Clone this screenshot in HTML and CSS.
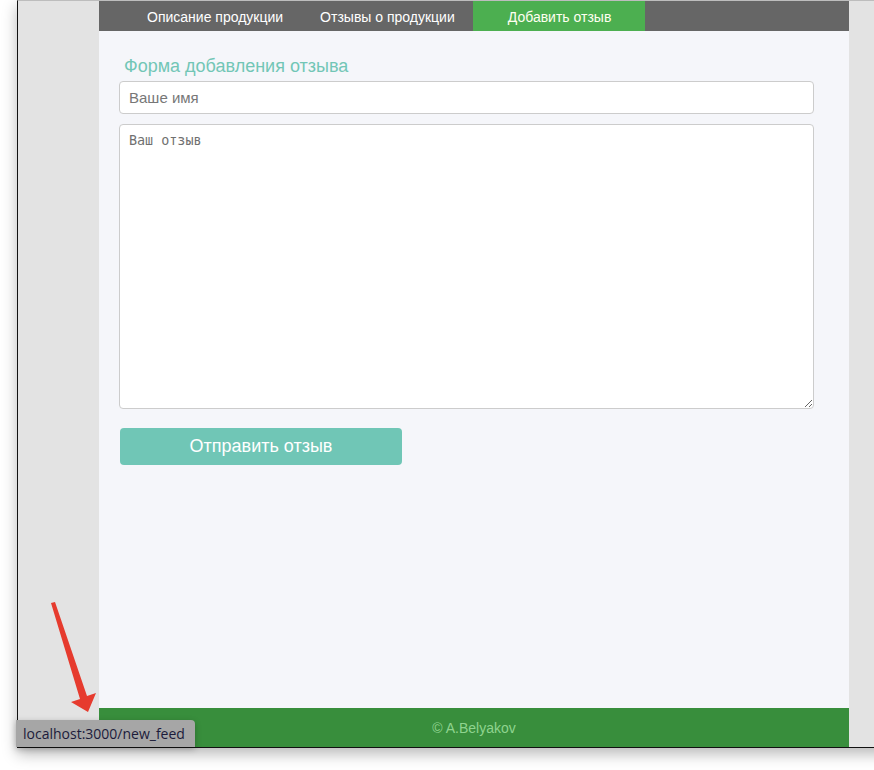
FILE: index.html
```html
<!DOCTYPE html>
<html lang="ru">
<head>
<meta charset="utf-8">
<title>Добавить отзыв</title>
<link rel="stylesheet" href="styles.css">
</head>
<body>
<div class="stage">
  <div class="window">
    <div class="side"></div>
    <div class="page">
      <nav class="nav">
        <a class="nav-item">Описание продукции</a>
        <a class="nav-item">Отзывы о продукции</a>
        <a class="nav-item active">Добавить отзыв</a>
      </nav>
      <main class="content">
        <h2 class="title">Форма добавления отзыва</h2>
        <form class="form">
          <input class="field" type="text" placeholder="Ваше имя">
          <textarea class="area" placeholder="Ваш отзыв"></textarea>
          <button class="submit" type="button">Отправить отзыв</button>
        </form>
      </main>
      <footer class="footer">© A.Belyakov</footer>
    </div>
    <div class="side-right"></div>
  </div>
  <svg class="arrow" width="60" height="120" viewBox="0 0 60 120">
    <polygon points="1,1 5,0 37,94 46,91 38,110 21,100 30,97" fill="#e63b2e"/>
  </svg>
  <div class="status">localhost:3000/new_feed</div>
</div>
</body>
</html>
```
FILE: styles.css
```css
html, body {
  margin: 0;
  padding: 0;
  background: #ffffff;
}
.stage {
  position: relative;
  width: 874px;
  height: 770px;
  overflow: hidden;
  padding-left: 17px;
  box-sizing: border-box;
}
.window {
  display: flex;
  width: 900px;
  height: 748px;
  box-sizing: border-box;
  border-left: 1px solid #111;
  border-top: 1px solid #bdbdbd;
  border-bottom: 1px solid #111;
  background: #e3e3e3;
  box-shadow: 0 6px 14px rgba(0,0,0,0.28);
}
.side {
  width: 81px;
  flex: none;
}
.side-right {
  flex: 1;
}
.page {
  width: 750px;
  flex: none;
  display: flex;
  flex-direction: column;
  background: #f5f6fa;
  font-family: "Liberation Sans", Arial, sans-serif;
}
.nav {
  display: flex;
  height: 30px;
  background: #666666;
  padding-left: 30px;
}
.nav-item {
  display: flex;
  align-items: center;
  padding: 1px 18px 0;
  color: #ffffff;
  font-size: 14px;
}
.nav-item:nth-child(2) {
  padding-left: 19px;
}
.nav-item.active {
  background: #4caf50;
  padding: 1px 34px 0 35px;
  color: #fffff0;
}
.content {
  flex: 1;
  padding: 0 20px;
}
.title {
  margin: 25px 0 4px 5px;
  font-size: 18px;
  font-weight: normal;
  color: #72c6b6;
  line-height: 21px;
}
.form {
  display: flex;
  flex-direction: column;
  align-items: flex-start;
  width: 695px;
}
.field {
  width: 695px;
  height: 33px;
  box-sizing: border-box;
  border: 1px solid #cccccc;
  border-radius: 4px;
  padding: 0 9px;
  font-family: "Liberation Sans", Arial, sans-serif;
  font-size: 15px;
  background: #ffffff;
}
.field::placeholder {
  color: #777777;
}
.area {
  margin-top: 10px;
  width: 695px;
  height: 285px;
  box-sizing: border-box;
  border: 1px solid #cccccc;
  border-radius: 4px;
  padding: 8px 9px 7px;
  font-family: "DejaVu Sans Mono", monospace;
  font-size: 13.4px;
  background: #ffffff;
}
.area::placeholder {
  color: #707070;
}
.submit {
  margin-top: 19px;
  margin-left: 1px;
  width: 282px;
  height: 37px;
  border: none;
  border-radius: 4px;
  background: #70c6b6;
  color: #ffffff;
  font-family: "Liberation Sans", Arial, sans-serif;
  font-size: 18px;
}
.footer {
  height: 39px;
  background: #388e3c;
  color: #8fd48f;
  font-size: 14px;
  display: flex;
  align-items: center;
  justify-content: center;
}
.arrow {
  position: absolute;
  left: 50px;
  top: 602px;
}
.status {
  position: absolute;
  left: 16px;
  top: 720px;
  height: 27px;
  padding: 0 10px 0 7px;
  background: #a6a6a6;
  color: #1b1b3b;
  font-family: "Open Sans", "Noto Sans", sans-serif;
  font-size: 14px;
  line-height: 27px;
  border-top-right-radius: 4px;
  box-shadow: 0 2px 6px rgba(0,0,0,0.25);
}
```
